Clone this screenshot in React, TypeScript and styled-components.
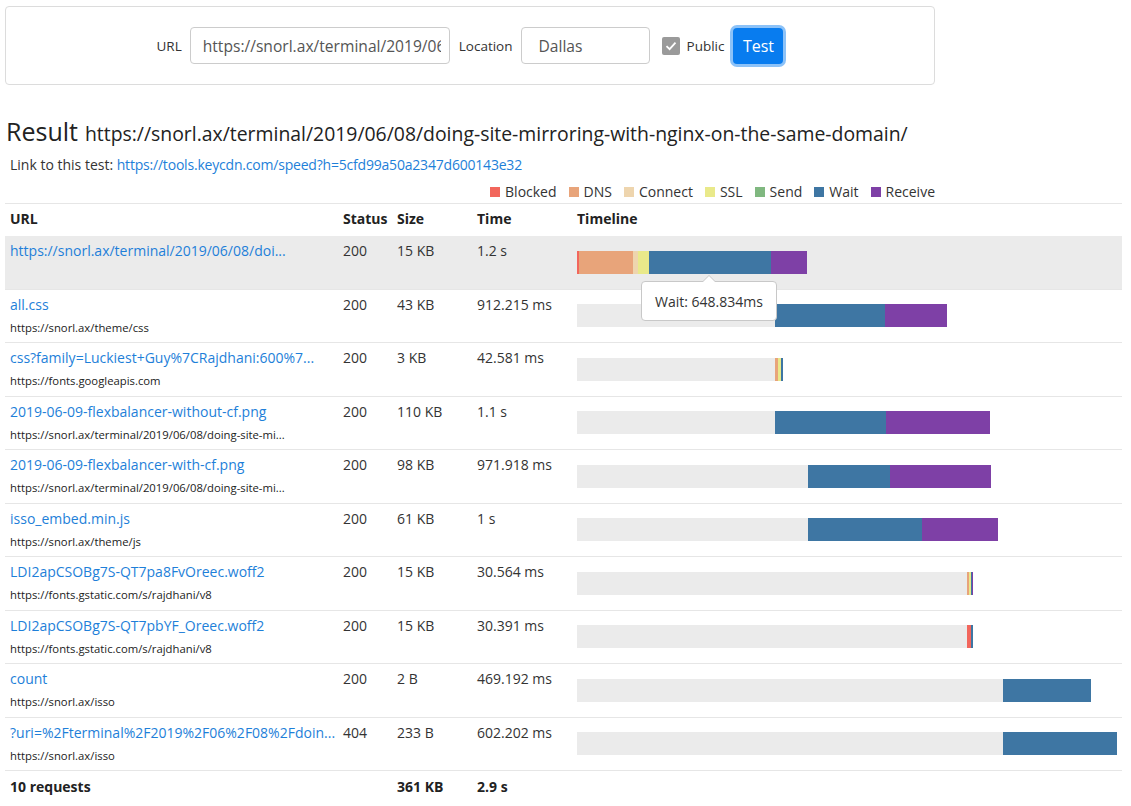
import React from "react";
import styled, { createGlobalStyle } from "styled-components";

const Global = createGlobalStyle`
  html, body { margin: 0; padding: 0; background: #fff; }
  body { font-family: "Open Sans", "Noto Sans", sans-serif; color: #333; font-size: 14px; }
  * { box-sizing: border-box; }
`;

const Page = styled.div`
  padding: 6px 9px 0 5px;
`;

const FormBox = styled.form`
  width: 930px;
  height: 79px;
  border: 1px solid #dcdcdc;
  border-radius: 4px;
  display: flex;
  align-items: center;
  justify-content: center;
`;

const Label = styled.label`
  font-size: 13.5px;
  color: #333;
  margin-right: 8px;
`;

const Input = styled.input<{ $w: number; $pl: number; $mr: number }>`
  width: ${(p) => p.$w}px;
  height: 37px;
  border: 1px solid #ccc;
  border-radius: 4px;
  padding: 0 8px 0 ${(p) => p.$pl}px;
  font-family: inherit;
  font-size: 15.6px;
  color: #555;
  margin-right: ${(p) => p.$mr}px;
  outline: none;
`;

const CheckWrap = styled.label`
  display: flex;
  align-items: center;
  font-size: 13.5px;
  color: #333;
  gap: 7px;
  margin-right: 6px;
`;

const CheckBox = styled.span`
  width: 18px;
  height: 18px;
  border-radius: 2px;
  background: #9a9a9a;
  display: flex;
  align-items: center;
  justify-content: center;
`;

const Button = styled.button`
  width: 50px;
  height: 36px;
  border: none;
  border-radius: 4px;
  background: #087cef;
  color: #fff;
  font-family: inherit;
  font-size: 16px;
  box-shadow: 0 0 0 3px #8cc2f8;
  margin-left: 3px;
  padding: 0;
`;

const Title = styled.h1`
  margin: 31px 0 0 1px;
  font-weight: 400;
  font-size: 25px;
  line-height: 30px;
  color: #222;
`;

const TitleUrl = styled.span`
  font-size: 19.4px;
  margin-left: 7px;
`;

const LinkLine = styled.div`
  margin: 6px 0 0 5px;
  font-size: 14px;
  line-height: 20px;
  color: #333;
`;

const A = styled.a`
  color: #1e7fd9;
  text-decoration: none;
  letter-spacing: -0.2px;
`;

const Legend = styled.div`
  width: 930px;
  display: flex;
  justify-content: flex-end;
  gap: 12px;
  margin-top: 7px;
  font-size: 14px;
  line-height: 20px;
`;

const LegendItem = styled.div`
  display: flex;
  align-items: center;
  gap: 5px;
`;

const Swatch = styled.span<{ $c: string }>`
  width: 10px;
  height: 10px;
  background: ${(p) => p.$c};
`;

const Table = styled.div`
  margin-top: 1px;
  width: 1117px;
  border-top: 1px solid #e6e6e6;
`;

const cols = "333px 54px 80px 100px 550px";

const HeadRow = styled.div`
  display: grid;
  grid-template-columns: ${cols};
  height: 32px;
  padding-bottom: 3px;
  align-items: center;
  font-weight: 700;
  font-size: 14px;
  color: #222;
  & > div { padding: 0 5px; }
`;

const Row = styled.div<{ $hl?: boolean }>`
  display: grid;
  grid-template-columns: ${cols};
  height: 53.5px;
  border-bottom: 1px solid #e6e6e6;
  background: ${(p) => (p.$hl ? "#ebebeb" : "transparent")};
  position: relative;
`;

const Cell = styled.div`
  padding: 5px 5px 0;
  font-size: 14px;
  line-height: 20px;
  color: #333;
  white-space: nowrap;
`;

const UrlLink = styled.a`
  display: block;
  color: #1e7fd9;
  text-decoration: none;
`;

const SubUrl = styled.div`
  margin-top: 4px;
  font-size: 11.3px;
  line-height: 18px;
  color: #222;
`;

const TimelineCell = styled.div`
  padding: 0 5px;
  display: flex;
  align-items: center;
`;

const Bar = styled.div`
  display: flex;
  height: 23px;
`;

const Seg = styled.span<{ $c: string }>`
  height: 100%;
  background: ${(p) => p.$c};
  flex: none;
`;

const FootRow = styled.div`
  display: grid;
  grid-template-columns: ${cols};
  height: 30px;
  align-items: center;
  font-weight: 700;
  font-size: 14px;
  color: #222;
  & > div { padding: 0 5px; }
`;

const Tooltip = styled.div`
  position: absolute;
  left: 636px;
  top: 45px;
  width: 136px;
  height: 40px;
  background: #fff;
  border: 1px solid #c8c8c8;
  border-radius: 4px;
  display: flex;
  align-items: center;
  justify-content: center;
  font-size: 14px;
  color: #333;
  z-index: 5;
  &::before, &::after {
    content: "";
    position: absolute;
    left: 50%;
    transform: translateX(-50%);
    border-style: solid;
    border-color: transparent;
  }
  &::before {
    top: -7px;
    border-width: 0 7px 7px 7px;
    border-bottom-color: #c8c8c8;
  }
  &::after {
    top: -6px;
    border-width: 0 6px 6px 6px;
    border-bottom-color: #fff;
  }
`;

const C = {
  blocked: "#f2665c",
  dns: "#e8a47a",
  connect: "#eed5ae",
  ssl: "#e9e98a",
  send: "#80b880",
  wait: "#3e76a3",
  receive: "#7e40a6",
  idle: "#ebebeb",
};

type S = [keyof typeof C, number];

const rows: {
  name: string;
  sub?: string;
  status: string;
  size: string;
  time: string;
  start: number;
  segs: S[];
}[] = [
  { name: "https://snorl.ax/terminal/2019/06/08/doi...", status: "200", size: "15 KB", time: "1.2 s", start: 0, segs: [["blocked", 2], ["dns", 54], ["connect", 5], ["ssl", 11], ["wait", 122], ["receive", 36]] },
  { name: "all.css", sub: "https://snorl.ax/theme/css", status: "200", size: "43 KB", time: "912.215 ms", start: 198, segs: [["wait", 110], ["receive", 62]] },
  { name: "css?family=Luckiest+Guy%7CRajdhani:600%7...", sub: "https://fonts.googleapis.com", status: "200", size: "3 KB", time: "42.581 ms", start: 198, segs: [["dns", 3], ["ssl", 3], ["wait", 2]] },
  { name: "2019-06-09-flexbalancer-without-cf.png", sub: "https://snorl.ax/terminal/2019/06/08/doing-site-mi...", status: "200", size: "110 KB", time: "1.1 s", start: 198, segs: [["wait", 111], ["receive", 104]] },
  { name: "2019-06-09-flexbalancer-with-cf.png", sub: "https://snorl.ax/terminal/2019/06/08/doing-site-mi...", status: "200", size: "98 KB", time: "971.918 ms", start: 231, segs: [["wait", 82], ["receive", 101]] },
  { name: "isso_embed.min.js", sub: "https://snorl.ax/theme/js", status: "200", size: "61 KB", time: "1 s", start: 231, segs: [["wait", 114], ["receive", 76]] },
  { name: "LDI2apCSOBg7S-QT7pa8FvOreec.woff2", sub: "https://fonts.gstatic.com/s/rajdhani/v8", status: "200", size: "15 KB", time: "30.564 ms", start: 390, segs: [["dns", 2], ["ssl", 2], ["wait", 1], ["receive", 1]] },
  { name: "LDI2apCSOBg7S-QT7pbYF_Oreec.woff2", sub: "https://fonts.gstatic.com/s/rajdhani/v8", status: "200", size: "15 KB", time: "30.391 ms", start: 390, segs: [["blocked", 4], ["wait", 2]] },
  { name: "count", sub: "https://snorl.ax/isso", status: "200", size: "2 B", time: "469.192 ms", start: 426, segs: [["wait", 88]] },
  { name: "?uri=%2Fterminal%2F2019%2F06%2F08%2Fdoin...", sub: "https://snorl.ax/isso", status: "404", size: "233 B", time: "602.202 ms", start: 426, segs: [["wait", 114]] },
];

const legend: [string, string][] = [
  ["Blocked", C.blocked],
  ["DNS", C.dns],
  ["Connect", C.connect],
  ["SSL", C.ssl],
  ["Send", C.send],
  ["Wait", C.wait],
  ["Receive", C.receive],
];

export default function App() {
  return (
    <Page>
      <Global />
      <FormBox onSubmit={(e) => e.preventDefault()}>
        <Label>URL</Label>
        <Input $w={260} $pl={12} $mr={9} defaultValue="https://snorl.ax/terminal/2019/06/08/doing-site-mirroring-with-nginx-on-the-same-domain/" />
        <Label>Location</Label>
        <Input $w={129} $pl={17} $mr={12} defaultValue="Dallas" />
        <CheckWrap>
          <CheckBox>
            <svg width="14" height="14" viewBox="0 0 14 14">
              <path d="M2.5 7.2 L5.6 10.2 L11.5 3.6" fill="none" stroke="#fff" strokeWidth="1.8" />
            </svg>
          </CheckBox>
          Public
        </CheckWrap>
        <Button type="submit">Test</Button>
      </FormBox>

      <Title>
        Result<TitleUrl>https://snorl.ax/terminal/2019/06/08/doing-site-mirroring-with-nginx-on-the-same-domain/</TitleUrl>
      </Title>
      <LinkLine>
        Link to this test: <A href="#">https://tools.keycdn.com/speed?h=5cfd99a50a2347d600143e32</A>
      </LinkLine>
      <Legend>
        {legend.map(([n, c]) => (
          <LegendItem key={n}>
            <Swatch $c={c} />
            {n}
          </LegendItem>
        ))}
      </Legend>

      <Table>
        <HeadRow>
          <div>URL</div>
          <div>Status</div>
          <div>Size</div>
          <div>Time</div>
          <div>Timeline</div>
        </HeadRow>
        {rows.map((r, i) => (
          <Row key={i} $hl={i === 0}>
            <Cell>
              <UrlLink href="#">{r.name}</UrlLink>
              {r.sub && <SubUrl>{r.sub}</SubUrl>}
            </Cell>
            <Cell>{r.status}</Cell>
            <Cell>{r.size}</Cell>
            <Cell>{r.time}</Cell>
            <TimelineCell>
              <Bar>
                {r.start > 0 && <Seg $c={C.idle} style={{ width: r.start }} />}
                {r.segs.map(([k, w], j) => (
                  <Seg key={j} $c={C[k]} style={{ width: w }} />
                ))}
              </Bar>
            </TimelineCell>
            {i === 0 && <Tooltip>Wait: 648.834ms</Tooltip>}
          </Row>
        ))}
        <FootRow>
          <div>10 requests</div>
          <div></div>
          <div>361 KB</div>
          <div>2.9 s</div>
          <div></div>
        </FootRow>
      </Table>
    </Page>
  );
}
